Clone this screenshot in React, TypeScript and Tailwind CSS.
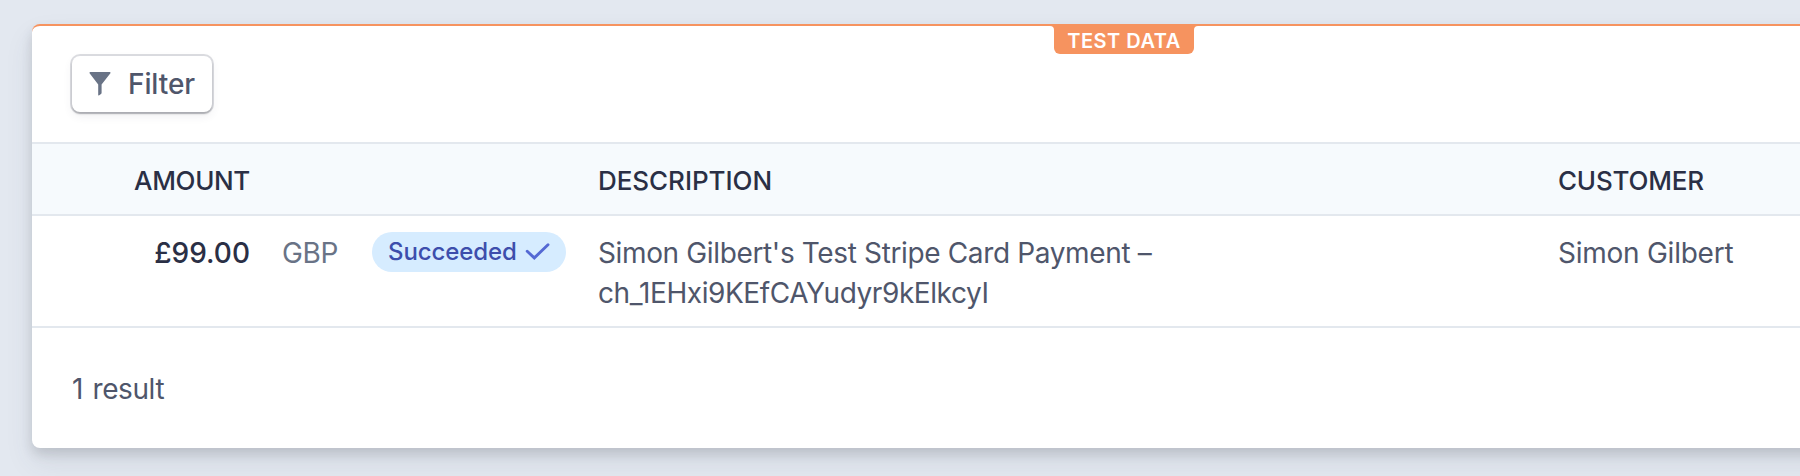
import React from 'react';

function FilterIcon() {
  return (
    <svg width="22" height="24" viewBox="0 0 22 24" className="shrink-0 fill-[#697386]">
      <path d="M1.200 0h19.600a.8.8 0 0 1 .6 1.300L12.600 12.600V20.800a1.500 1.500 0 0 1-.6 1.200L9.900 23.500A.5.5 0 0 1 9.200 23.100V12.600L.6 1.300A.8.8 0 0 1 1.200 0Z" />
    </svg>
  );
}

function CheckIcon() {
  return (
    <svg width="26" height="18" viewBox="0 0 26 18" className="shrink-0 fill-none stroke-[#5469d4]">
      <path d="M2.200 8.200 9.300 14.900 23 1.800" strokeWidth="2.900" strokeLinecap="round" strokeLinejoin="miter" />
    </svg>
  );
}

function TestDataBadge() {
  return (
    <div className="absolute -top-[2px] left-[1022px] flex h-[30px] w-[140px] items-center justify-center rounded-b-[6px] bg-[#f6935f] pt-[4px] text-[20px] leading-none font-semibold text-white">
      <svg width="4" height="4" viewBox="0 0 4 4" className="absolute top-[2px] -left-[4px] fill-[#f6935f]">
        <path d="M0 0h4v4A4 4 0 0 0 0 0Z" />
      </svg>
      <span className="tracking-[0.5px]">TEST DATA</span>
      <svg width="4" height="4" viewBox="0 0 4 4" className="absolute top-[2px] -right-[4px] fill-[#f6935f]">
        <path d="M4 0H0v4A4 4 0 0 1 4 0Z" />
      </svg>
    </div>
  );
}

const columns = 'grid grid-cols-[218px_348px_960px_1fr]';

export default function App() {
  return (
    <div className="h-[476px] w-[1800px] overflow-hidden bg-[#e3e8f0] pt-6 pl-8 font-['Inter','Liberation_Sans',sans-serif] text-[28px] leading-10 whitespace-nowrap text-[#4f566b]">
      <div className="relative h-[424px] w-[1832px] rounded-[8px] border-t-2 border-[#f6935f] bg-white shadow-[0_14px_28px_0_rgba(60,66,87,0.10),0_6px_12px_0_rgba(0,0,0,0.12)]">
        <TestDataBadge />
        <div className="-mt-[2px] h-[118px] pt-8 pl-10">
          <button className="flex h-14 w-[140px] items-center rounded-[8px] bg-white pl-[17px] font-medium shadow-[0_0_0_2px_rgba(60,66,87,0.18),0_2px_2px_0_rgba(0,0,0,0.2),0_4px_10px_0_rgba(60,66,87,0.08)]">
            <FilterIcon />
            <span className="ml-[17px] tracking-[-0.1px]">Filter</span>
          </button>
        </div>
        <div className={`${columns} h-[74px] items-center border-y-2 border-[#e3e8ee] bg-[#f6fafd] pt-[3px] text-[26px] font-medium text-[#2a2f45]`}>
          <span className="text-right tracking-[-0.35px]">AMOUNT</span>
          <span />
          <span className="tracking-[-0.05px]">DESCRIPTION</span>
          <span className="tracking-[-0.2px]">CUSTOMER</span>
        </div>
        <div className={`${columns} h-[112px] border-b-2 border-[#e3e8ee] pt-4`}>
          <span className="pt-px text-right font-medium text-[#2a2f45]">£99.00</span>
          <div className="flex items-start pl-8">
            <span className="w-[90px] pt-px tracking-[-0.4px] text-[#697386]">GBP</span>
            <span className="flex h-10 w-[194px] items-center rounded-full bg-[#d6ecff] pl-4 text-[24px] font-medium text-[#3d4eac]">
              <span className="w-[137px] tracking-[-0.1px]">Succeeded</span>
              <CheckIcon />
            </span>
          </div>
          <div className="pt-px">
            <div className="tracking-[-0.36px]">Simon Gilbert's Test Stripe Card Payment –</div>
            <div className="tracking-[-0.42px]">ch_1EHxi9KEfCAYudyr9kElkcyI</div>
          </div>
          <span className="pt-px tracking-[-0.25px]">Simon Gilbert</span>
        </div>
        <div className="h-[120px] pt-[41px] pl-10 tracking-[-0.4px] [word-spacing:2px]">1 result</div>
      </div>
    </div>
  );
}
